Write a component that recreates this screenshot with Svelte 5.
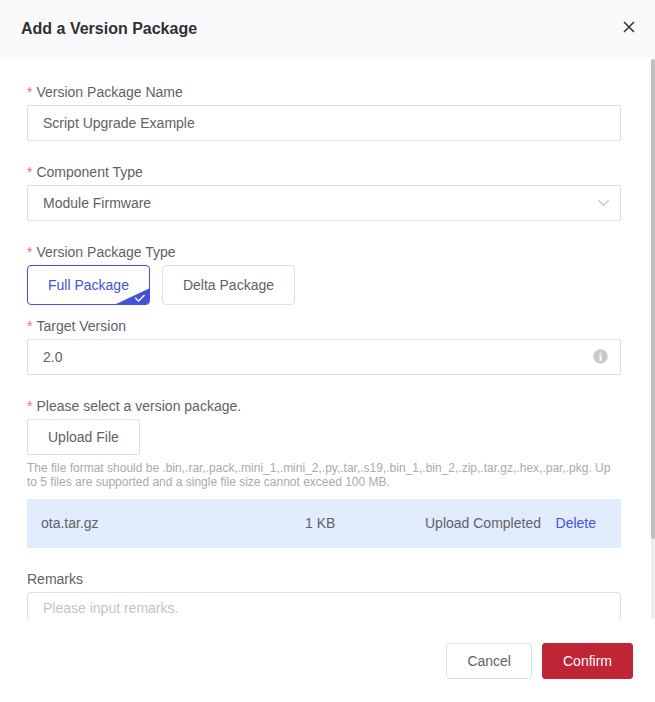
<script>
  let name = $state('Script Upgrade Example');
  let version = $state('2.0');
  let packageType = $state('Full Package');
  const packageTypes = ['Full Package', 'Delta Package'];
  const file = { name: 'ota.tar.gz', size: '1 KB', status: 'Upload Completed' };
</script>

{#snippet label(text, required = true)}
  <div class="label">{#if required}<span class="star">*</span>{/if}<span>{text}</span></div>
{/snippet}

<div class="dialog">
  <header>
    <h1>Add a Version Package</h1>
    <button class="close" aria-label="Close">
      <svg width="12" height="12" viewBox="0 0 12 12"><path d="M1 1 11 11M11 1 1 11" /></svg>
    </button>
  </header>

  <div class="body">
    <div class="form">
      <section>
        {@render label('Version Package Name')}
        <div class="field"><input bind:value={name} aria-label="Version Package Name" /></div>
      </section>

      <section>
        {@render label('Component Type')}
        <div class="field">
          <span>Module Firmware</span>
          <svg class="chevron" width="12" height="8" viewBox="0 0 12 8"><path d="M1.3 1.2 6.5 6.3 11.7 1.2" /></svg>
        </div>
      </section>

      <section class="tight">
        {@render label('Version Package Type')}
        <div class="types">
          {#each packageTypes as type}
            <button class="type" class:active={packageType === type} onclick={() => (packageType = type)}>
              {type}
              {#if packageType === type}
                <svg class="corner" width="36" height="17" viewBox="0 0 36 17">
                  <path class="wedge" d="M36 0V17H0Z" />
                  <path class="tick" d="M21.2 9.8 24.5 13 30.6 7" />
                </svg>
              {/if}
            </button>
          {/each}
        </div>
      </section>

      <section>
        {@render label('Target Version')}
        <div class="field">
          <input bind:value={version} aria-label="Target Version" />
          <svg class="info" width="15" height="15" viewBox="0 0 15 15">
            <circle cx="7.5" cy="7.5" r="7.2" />
            <path d="M6.6 3.7h1.9v1.6H6.6zM6 6.3h2.5v4.2h.7v.9H6v-.9h.7V7.2H6z" />
          </svg>
        </div>
      </section>

      <section>
        {@render label('Please select a version package.')}
        <button class="btn upload">Upload File</button>
        <p class="hint">The file format should be .bin,.rar,.pack,.mini_1,.mini_2,.py,.tar,.s19,.bin_1,.bin_2,.zip,.tar.gz,.hex,.par,.pkg. Up to 5 files are supported and a single file size cannot exceed 100 MB.</p>
        <div class="file">
          <span class="filename">{file.name}</span>
          <span class="size">{file.size}</span>
          <span class="status">{file.status}</span>
          <span class="delete">Delete</span>
        </div>
      </section>

      <section>
        {@render label('Remarks', false)}
        <textarea placeholder="Please input remarks." aria-label="Remarks"></textarea>
      </section>
    </div>
    <div class="track"><div class="thumb"></div></div>
  </div>

  <footer>
    <button class="btn">Cancel</button>
    <button class="btn confirm">Confirm</button>
  </footer>
</div>

<style>
  .dialog {
    width: 655px;
    height: 702px;
    display: flex;
    flex-direction: column;
    background: #fff;
    color: #606266;
    font: 14px/20px "Liberation Sans", Arial, sans-serif;
    overflow: hidden;
  }
  .dialog * { box-sizing: border-box; }
  button, input, textarea { font: inherit; color: inherit; }
  button { cursor: pointer; }
  header {
    flex: none;
    height: 59px;
    padding: 0 20px 2px 21px;
    display: flex;
    align-items: center;
    justify-content: space-between;
    background: #fafafc;
  }
  h1 { margin: 0; font-size: 16px; line-height: 25px; font-weight: 700; color: #303133; }
  .close { display: flex; padding: 0; margin-top: -3px; border: 0; background: none; }
  .close svg { fill: none; stroke: #303133; stroke-width: 1.5; }
  .body { flex: none; height: 560px; display: flex; overflow: hidden; }
  .form { flex: 1; padding: 20px 30px 0 27px; }
  section { margin-bottom: 18px; }
  .tight { margin-bottom: 8px; }
  .label { height: 26px; line-height: 26px; }
  .star { color: #f56c6c; margin-right: 4px; }
  .field {
    height: 36px;
    padding: 0 11px 0 15px;
    display: flex;
    align-items: center;
    justify-content: space-between;
    border: 1px solid #dcdfe6;
    border-radius: 2px;
  }
  .field input { flex: 1; min-width: 0; padding: 0; border: 0; outline: 0; background: none; }
  .chevron { fill: none; stroke: #c0c4cc; stroke-width: 1.2; }
  .info { margin: 0 1px 1px 0; fill: #c8c9cc; }
  .info path { fill: #fff; }
  .types { display: flex; gap: 12px; }
  .type {
    position: relative;
    height: 40px;
    padding: 0 20px;
    border: 1px solid #dcdfe6;
    border-radius: 4px;
    background: #fff;
    overflow: hidden;
  }
  .type.active { border-color: #4353d9; color: #4353d9; }
  .corner { position: absolute; right: -1px; bottom: -1px; }
  .wedge { fill: #4353d9; }
  .tick { fill: none; stroke: #fff; stroke-width: 1.3; }
  .btn {
    height: 36px;
    padding: 0 20px;
    border: 1px solid #dcdfe6;
    border-radius: 3px;
    background: #fff;
  }
  .upload { display: block; border-radius: 2px; }
  .hint { margin: 6px 0 10px; font-size: 12px; line-height: 14px; color: #aaa; }
  .file {
    height: 49px;
    padding: 0 25px 1px 14px;
    display: flex;
    align-items: center;
    background: #e1ecff;
  }
  .filename { width: 264px; }
  .size { width: 120px; }
  .status { flex: 1; white-space: nowrap; }
  .delete { color: #4353d9; }
  textarea {
    display: block;
    width: 100%;
    height: 80px;
    padding: 5px 15px;
    border: 1px solid #dcdfe6;
    border-radius: 4px;
    resize: none;
  }
  textarea::placeholder { color: #c0c4cc; }
  .track { flex: none; width: 4px; border-radius: 2px; background: #ededed; }
  .thumb { height: 480px; border-radius: 2px; background: #bfbfbf; }
  footer {
    flex: 1;
    padding: 24px 22px 0 0;
    display: flex;
    justify-content: flex-end;
    align-items: flex-start;
    gap: 10px;
  }
  .confirm { border-color: #c02536; background: #c02536; color: #fff; }
</style>
